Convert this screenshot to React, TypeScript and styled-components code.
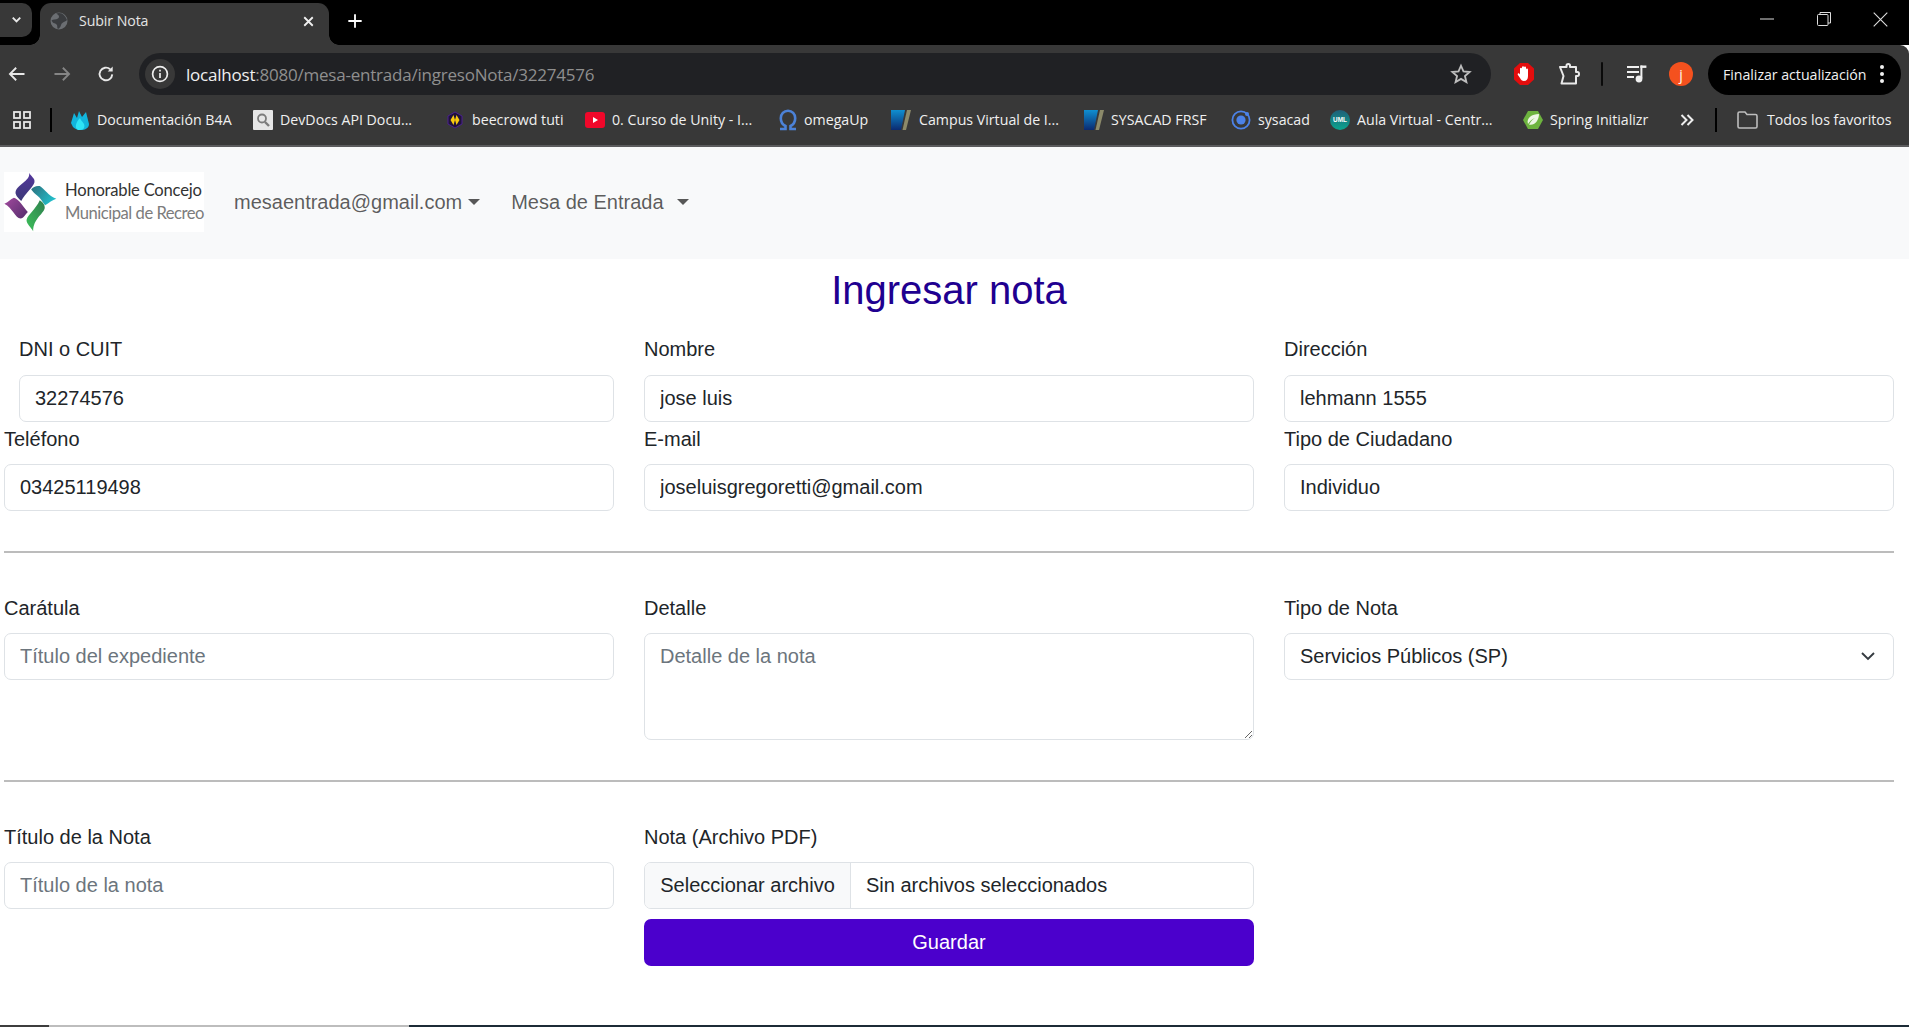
import React from "react";
import styled, { createGlobalStyle } from "styled-components";

const Global = createGlobalStyle`
  html, body { margin: 0; padding: 0; height: 100%; background: #fff; overflow: hidden; }
  #root { height: 100%; }
  * { box-sizing: border-box; }
`;

const Page = styled.div`
  height: 1027px;
  display: flex;
  flex-direction: column;
  font-family: "Liberation Sans", Arial, sans-serif;
  color: #212529;
`;

/* ---------- browser chrome ---------- */
const TabStrip = styled.div`
  height: 45px;
  flex: none;
  background: #000;
  display: flex;
  align-items: flex-end;
  font-family: "Open Sans", "Noto Sans", sans-serif;
`;
const TabSearch = styled.div`
  width: 32px;
  height: 34px;
  margin-bottom: 8px;
  padding-bottom: 2px;
  background: #383838;
  border-radius: 0 10px 10px 0;
  display: flex;
  align-items: center;
  justify-content: center;
`;
const Tab = styled.div`
  position: relative;
  width: 289px;
  height: 42px;
  margin-left: 8px;
  padding: 0 12px 6px 10px;
  background: #383838;
  border-radius: 11px 11px 0 0;
  display: flex;
  align-items: center;
  gap: 11px;
  color: #e4e4e4;
  font-size: 14.2px;
  letter-spacing: -0.1px;
  &::before, &::after {
    content: "";
    position: absolute;
    bottom: 0;
    width: 10px;
    height: 10px;
    background: radial-gradient(circle at var(--cx) 0, #000 9.5px, #383838 10px);
  }
  &::before { left: -10px; --cx: 0; }
  &::after { right: -10px; --cx: 100%; }
`;
const TabTitle = styled.span`
  flex: 1;
  padding-bottom: 1px;
`;
const NewTab = styled.div`
  width: 52px;
  height: 42px;
  padding-bottom: 6px;
  display: flex;
  align-items: center;
  justify-content: center;
`;
const WindowButtons = styled.div`
  margin-left: auto;
  height: 45px;
  width: 170px;
  display: flex;
  align-items: center;
  padding: 0 21px 7px 21px;
  justify-content: space-between;
`;

const Toolbar = styled.div`
  height: 52px;
  flex: none;
  background: #383838;
  border-top-right-radius: 9px;
  display: flex;
  align-items: center;
  font-family: "Open Sans", "Noto Sans", sans-serif;
  padding-top: 6px;
`;
const NavIcons = styled.div`
  width: 139px;
  flex: none;
  padding: 0 23px 0 7px;
  display: flex;
  align-items: center;
  justify-content: space-between;
`;
const Omnibox = styled.div`
  width: 1352px;
  height: 42px;
  flex: none;
  background: #202124;
  border-radius: 21px;
  display: flex;
  align-items: center;
  padding: 0 19px 0 6px;
`;
const InfoBadge = styled.div`
  width: 30px;
  height: 30px;
  flex: none;
  border-radius: 50%;
  background: #383838;
  display: flex;
  align-items: center;
  justify-content: center;
`;
const Url = styled.div`
  margin-left: 11px;
  flex: 1;
  font-size: 17px;
  letter-spacing: -0.22px;
  color: #8f8f8f;
  white-space: nowrap;
  & > b { font-weight: 400; color: #f0f0f0; }
`;
const Extensions = styled.div`
  flex: 1;
  display: flex;
  align-items: center;
  padding: 0 8px 0 22px;
`;
const ThinSep = styled.div`
  width: 2px;
  height: 24px;
  flex: none;
  background: #0a0a0a;
  border-radius: 1px;
`;
const ExtSlot = styled.div<{ $ml: number }>`
  margin-left: ${(p) => p.$ml}px;
  display: flex;
  align-items: center;
  justify-content: center;
  flex: none;
`;
const Avatar = styled.div`
  width: 24px;
  height: 24px;
  margin-left: 20px;
  border-radius: 50%;
  background: #f4511e;
  color: #ffe;
  font-size: 14px;
  display: flex;
  align-items: center;
  justify-content: center;
  flex: none;
`;
const UpdatePill = styled.div`
  margin-left: auto;
  width: 193px;
  height: 42px;
  border-radius: 21px;
  background: #000;
  color: #f1f1f1;
  font-size: 14.2px;
  letter-spacing: -0.04px;
  padding: 0 17px 0 15px;
  display: flex;
  align-items: center;
  justify-content: space-between;
  white-space: nowrap;
`;

const Bookmarks = styled.div`
  height: 50px;
  flex: none;
  background: #383838;
  border-bottom: 2px solid #5b5b5d;
  padding: 0 17px 3px 13px;
  display: flex;
  align-items: center;
  color: #f0f0f0;
  font-family: "Open Sans", "Noto Sans", sans-serif;
  font-size: 14.2px;
  letter-spacing: 0;
`;
const BookSep = styled.div<{ $ml: number }>`
  width: 2px;
  height: 24px;
  flex: none;
  background: #000;
  margin-left: ${(p) => p.$ml}px;
`;
const BookSpacer = styled.div`
  width: 18px;
  flex: none;
`;
const Bookmark = styled.div<{ $w: number; $gap?: number }>`
  width: ${(p) => p.$w}px;
  flex: none;
  display: flex;
  align-items: center;
  gap: ${(p) => p.$gap ?? 7}px;
  white-space: nowrap;
`;
const MoreChevrons = styled.div`
  width: 18px;
  flex: none;
  display: flex;
  align-items: center;
`;
const AllFavs = styled.div`
  margin-left: 20px;
  display: flex;
  align-items: center;
  gap: 9px;
  white-space: nowrap;
`;

/* ---------- site navbar ---------- */
const Navbar = styled.nav`
  height: 112px;
  flex: none;
  background: #f8f9fa;
  display: flex;
  align-items: center;
  padding: 0 0 2px 4px;
  font-size: 20px;
  color: rgba(0, 0, 0, 0.65);
`;
const Logo = styled.div`
  width: 200px;
  height: 60px;
  background: #fff;
  display: flex;
  align-items: center;
  gap: 8px;
  flex: none;
  & > svg { flex: none; }
`;
const LogoText = styled.div`
  font-family: Lato, "Open Sans", sans-serif;
  display: flex;
  flex-direction: column;
  gap: 1px;
  white-space: nowrap;
  margin-top: -2px;
`;
const LogoLine = styled.div<{ $light?: boolean }>`
  font-size: 16.6px;
  line-height: 22px;
  letter-spacing: ${(p) => (p.$light ? "-0.48px" : "-0.22px")};
  color: ${(p) => (p.$light ? "#7c7c7c" : "#333")};
`;
const NavLink = styled.div<{ $ml: number; $gap: number }>`
  margin-left: ${(p) => p.$ml}px;
  display: flex;
  align-items: center;
  gap: ${(p) => p.$gap}px;
`;
const Caret = styled.span`
  width: 0;
  height: 0;
  border-top: 6px solid rgba(0, 0, 0, 0.65);
  border-left: 6px solid transparent;
  border-right: 6px solid transparent;
`;

/* ---------- form ---------- */
const Main = styled.main`
  flex: 1;
  padding: 0 15px 0 4px;
`;
const Title = styled.h2`
  margin: 0;
  height: 76px;
  padding-top: 8px;
  text-align: center;
  font-weight: 400;
  font-size: 40px;
  line-height: 47px;
  color: #1f0090;
`;
const Grid = styled.div`
  display: grid;
  grid-template-columns: repeat(3, 1fr);
  column-gap: 30px;
  row-gap: 3px;
`;
const Field = styled.div<{ $inset?: boolean }>`
  display: flex;
  flex-direction: column;
  min-width: 0;
  padding-left: ${(p) => (p.$inset ? 15 : 0)}px;
`;
const Label = styled.label`
  font-size: 20px;
  line-height: 29px;
  margin-bottom: 10.5px;
`;
const controlStyles = `
  width: 100%;
  height: 47px;
  border: 1px solid #dee2e6;
  border-radius: 7px;
  background: #fff;
  color: #212529;
  font-family: "Liberation Sans", Arial, sans-serif;
  font-size: 20px;
  padding: 0 15px;
  outline: none;
  &::placeholder { color: #6c757d; opacity: 1; }
`;
const Input = styled.input`
  ${controlStyles}
`;
const TextArea = styled.textarea`
  ${controlStyles}
  height: 107px;
  padding-top: 8px;
  line-height: 29px;
  resize: vertical;
  display: block;
`;
const SelectBox = styled.div`
  position: relative;
`;
const Select = styled.select`
  ${controlStyles}
  padding-bottom: 2px;
  appearance: none;
`;
const SelectChevron = styled.svg`
  position: absolute;
  right: 19px;
  top: 17px;
  pointer-events: none;
`;
const Divider = styled.hr`
  border: 0;
  height: 2px;
  margin: 40px 0 40.5px;
  background: #bcbcbc;
`;
const FileControl = styled.div`
  height: 47px;
  border: 1px solid #dee2e6;
  border-radius: 7px;
  display: flex;
  align-items: stretch;
  overflow: hidden;
  font-size: 20px;
`;
const FileButton = styled.div`
  width: 206px;
  flex: none;
  background: #f8f9fa;
  border-right: 1px solid #dee2e6;
  display: flex;
  align-items: center;
  justify-content: center;
`;
const FileName = styled.div`
  display: flex;
  align-items: center;
  padding-left: 15px;
`;
const SaveButton = styled.button`
  margin-top: 10px;
  height: 47px;
  border: 0;
  border-radius: 7px;
  background: #4b00cc;
  color: #fff;
  font-family: "Liberation Sans", Arial, sans-serif;
  font-size: 20px;
`;
const Taskbar = styled.div`
  height: 2px;
  flex: none;
  display: flex;
`;
const TaskSegment = styled.div<{ $w?: number; $bg: string }>`
  width: ${(p) => (p.$w ? `${p.$w}px` : "auto")};
  flex: ${(p) => (p.$w ? "none" : 1)};
  background: ${(p) => p.$bg};
`;

/* ---------- icons ---------- */
const Stroke: React.FC<{ size: number; w?: number; c?: string; children: React.ReactNode }> = ({ size, w = 2, c = "#e8e8e8", children }) => (
  <svg width={size} height={size} viewBox="0 0 24 24" fill="none" stroke={c} strokeWidth={w}>{children}</svg>
);

const LogoMark = () => (
  <svg width="53" height="60" viewBox="12 20 160 180">
    <defs>
      <linearGradient id="lgI" x1="0" y1="0" x2="0" y2="1"><stop offset="0" stopColor="#54369c" /><stop offset="1" stopColor="#3c3a78" /></linearGradient>
      <linearGradient id="lgT" x1="0" y1="0" x2="1" y2="0.6"><stop offset="0" stopColor="#2d6f7c" /><stop offset="1" stopColor="#22c0cc" /></linearGradient>
      <linearGradient id="lgM" x1="0" y1="0" x2="1" y2="0.8"><stop offset="0" stopColor="#a24a9e" /><stop offset="1" stopColor="#5a2f70" /></linearGradient>
      <linearGradient id="lgG" x1="1" y1="0" x2="0" y2="1"><stop offset="0" stopColor="#2f7f4e" /><stop offset="1" stopColor="#3cc05a" /></linearGradient>
    </defs>
    <path d="M88 22C92 32 106 38 104 50C101 64 76 84 64 107C58 100 50 95 47 84C45 72 58 62 70 52C80 44 90 36 88 22Z" fill="url(#lgI)" />
    <path d="M94 72C100 64 110 60 120 62C134 70 146 92 170 100C158 104 148 112 136 120C128 110 122 96 112 90C106 86 100 80 94 72Z" fill="url(#lgT)" />
    <path d="M13 115C24 112 32 100 42 97C56 100 70 124 84 140C76 148 72 158 62 160C46 158 38 128 13 115Z" fill="url(#lgM)" />
    <path d="M120 105C128 110 136 118 135 128C132 146 100 160 100 198C94 186 80 176 80 164C84 148 108 132 120 105Z" fill="url(#lgG)" />
  </svg>
);

const FlameIcon = () => (
  <svg width="20" height="20" viewBox="0 0 20 20"><path d="M1 13L4 3L7 8L9 1L12 7L16 2L19 14C19 18 15 20 11 20C7 20 5 19 3 17Z" fill="#12b5dc" /><path d="M8 20C4 18 6 12 10 8C11 12 16 13 14 18C13 20 10 20 8 20Z" fill="#2fe4f5" /></svg>
);
const DevDocsIcon = () => (
  <svg width="20" height="20" viewBox="0 0 20 20"><rect width="20" height="20" rx="1" fill="#e6e6e6" /><circle cx="9" cy="8.5" r="4" fill="none" stroke="#7c7c7c" strokeWidth="1.8" /><path d="M12 12L16 16" stroke="#7c7c7c" strokeWidth="2.4" /></svg>
);
const BeeIcon = () => (
  <svg width="16" height="18" viewBox="0 0 16 18"><path d="M8 1L15 5V13L8 17L1 13V5Z" fill="#20123a" stroke="#4a2190" /><path d="M6.5 4L3.5 9L6.5 14L8 9ZM9.5 4L12.5 9L9.5 14L8 9Z" fill="#f7c90e" /></svg>
);
const YoutubeIcon = () => (
  <svg width="20" height="16" viewBox="0 0 20 16"><rect width="20" height="16" rx="3" fill="#f0072a" /><path d="M8 5L13 8L8 11Z" fill="#fff" /></svg>
);
const OmegaIcon = () => (
  <svg width="18" height="22" viewBox="0 0 18 22" fill="none" stroke="#4c82d8" strokeWidth="2.6"><path d="M1 20H6.5V17C3.5 15.5 1.8 12.5 1.8 9.2C1.8 5 4.8 1.8 9 1.8S16.2 5 16.2 9.2C16.2 12.5 14.5 15.5 11.5 17V20H17" /></svg>
);
const CampusIcon: React.FC<{ id: string }> = ({ id }) => (
  <svg width="20" height="20" viewBox="0 0 20 20">
    <defs><linearGradient id={id} x1="0" y1="0" x2="0" y2="1"><stop offset="0" stopColor="#0f8fd0" /><stop offset="1" stopColor="#0b2a70" /></linearGradient></defs>
    <path d="M0 0H14L10 20H0Z" fill={`url(#${id})`} /><path d="M16 0H20L15 20H11.5Z" fill="#8c8a6a" />
  </svg>
);
const RingIcon = () => (
  <svg width="20" height="20" viewBox="0 0 20 20"><circle cx="10" cy="10" r="8.6" fill="none" stroke="#4c82e8" strokeWidth="1.8" /><circle cx="10" cy="10" r="4.6" fill="#4c82e8" /><circle cx="16" cy="4" r="2" fill="#4c82e8" /></svg>
);
const UmlIcon = () => (
  <svg width="20" height="20" viewBox="0 0 20 20">
    <defs><linearGradient id="ug" x1="0" y1="0" x2="0" y2="1"><stop offset="0" stopColor="#1f5f78" /><stop offset="1" stopColor="#0ba58e" /></linearGradient></defs>
    <circle cx="10" cy="10" r="10" fill="url(#ug)" /><text x="10" y="12.2" textAnchor="middle" fontSize="6.4" fontWeight="700" fill="#fff" fontFamily="Liberation Sans">UML</text>
  </svg>
);
const SpringIcon = () => (
  <svg width="20" height="20" viewBox="0 0 20 20"><path d="M5 1H15L20 10L15 19H5L0 10Z" fill="#6db33f" /><path d="M5 14C3 8 9 4 16 4C16 11 11 16 6 14.5C8 11 10 9 12 8C9 9 7 11 5 14Z" fill="#eef6e6" /></svg>
);
const AdblockIcon = () => (
  <svg width="22" height="24" viewBox="0 0 22 24"><path d="M7 1H15L21 6.5V17.5L15 23H7L1 17.5V6.5Z" fill="#e30d0d" /><path d="M7 11V6.8a1 1 0 0 1 2 0V11V5.2a1 1 0 0 1 2 0V11V5.6a1 1 0 0 1 2 0V11.5V7.6a1 1 0 0 1 2 0V14C15 17.5 13.5 19 11 19C9 19 8 18 7 16L4.8 12.8C4.2 11.6 5.6 10.7 6.4 11.8L7 12.6Z" fill="#fff" /></svg>
);
const PuzzleIcon = () => (
  <svg width="24" height="24" viewBox="0 0 24 24" fill="none" stroke="#e9e9e9" strokeWidth="2" strokeLinejoin="round"><path d="M3 5H9.5V3.5C9.5 1.5 13 1.5 13 3.5V5H19V10H20.5C22.5 10 22.5 14 20.5 14H19V21.5H4.5L6.5 14L3 5Z" /></svg>
);
const MusicIcon = () => (
  <svg width="22" height="20" viewBox="0 0 22 20" fill="#f0f0f0"><rect x="0" y="2" width="12" height="2" /><rect x="0" y="7" width="12" height="2" /><rect x="0" y="12" width="7" height="2" /><circle cx="12" cy="15" r="3.4" /><rect x="13.4" y="1.5" width="2" height="13" /><rect x="13.4" y="1.5" width="6" height="2.4" /></svg>
);

const bookmarks = [
  { w: 183, icon: <FlameIcon />, text: "Documentación B4A" },
  { w: 194, icon: <DevDocsIcon />, text: "DevDocs API Docu..." },
  { w: 138, icon: <BeeIcon />, text: "beecrowd tuti", gap: 9 },
  { w: 194, icon: <YoutubeIcon />, text: "0. Curso de Unity - I...", gap: 7 },
  { w: 112, icon: <OmegaIcon />, text: "omegaUp" },
  { w: 193, icon: <CampusIcon id="cg1" />, text: "Campus Virtual de I...", gap: 8 },
  { w: 147, icon: <CampusIcon id="cg2" />, text: "SYSACAD FRSF" },
  { w: 99, icon: <RingIcon />, text: "sysacad", gap: 7 },
  { w: 193, icon: <UmlIcon />, text: "Aula Virtual - Centr..." },
  { w: 157, icon: <SpringIcon />, text: "Spring Initializr", gap: 7 },
];

export default function App() {
  return (
    <Page>
      <Global />
      <TabStrip>
        <TabSearch>
          <Stroke size={15} w={3}><path d="M6 9L12 15L18 9" /></Stroke>
        </TabSearch>
        <Tab>
          <svg width="18" height="18" viewBox="0 0 18 18">
            <circle cx="9" cy="9" r="8.5" fill="#6b6e72" />
            <path d="M6 1.5C9 3 10 5 8 6.5C6 8 3 7 1.5 8.5C3 12 6 11 7 13C7.5 15 7 16 8 17C12 15 10 12 13 10.5C15 9.5 16 9 17 8C16 5 14 3 12 1.5C10 .8 8 .8 6 1.5Z" fill="#3a3c3f" />
          </svg>
          <TabTitle>Subir Nota</TabTitle>
          <Stroke size={17} w={2.6} c="#f0f0f0"><path d="M6 6L18 18M18 6L6 18" /></Stroke>
        </Tab>
        <NewTab>
          <Stroke size={20} w={2.2} c="#fff"><path d="M12 4V20M4 12H20" /></Stroke>
        </NewTab>
        <WindowButtons>
          <svg width="14" height="14" viewBox="0 0 14 14"><path d="M0 7H14" stroke="#ddd" strokeWidth="1" /></svg>
          <svg width="14" height="14" viewBox="0 0 14 14" fill="none" stroke="#ddd"><rect x=".5" y="2.5" width="10.5" height="11" rx="1" /><path d="M3 2.5V.5H13.5V11H11" /></svg>
          <svg width="15" height="15" viewBox="0 0 15 15"><path d="M.7 .7L14.3 14.3M14.3 .7L.7 14.3" stroke="#ddd" strokeWidth="1.1" /></svg>
        </WindowButtons>
      </TabStrip>

      <Toolbar>
        <NavIcons>
          <Stroke size={20} w={2.2}><path d="M21 12H4M11 4.5L3.5 12L11 19.5" /></Stroke>
          <Stroke size={20} w={2.2} c="#858585"><path d="M3 12H20M13 4.5L20.5 12L13 19.5" /></Stroke>
          <Stroke size={20} w={2.3}><path d="M19.5 12.5A7.6 7.6 0 1 1 17 6.3" /><path d="M20 3V9H14Z" fill="#e8e8e8" stroke="none" /></Stroke>
        </NavIcons>
        <Omnibox>
          <InfoBadge>
            <svg width="18" height="18" viewBox="0 0 18 18" fill="none" stroke="#eee" strokeWidth="1.7"><circle cx="9" cy="9" r="7.4" /><path d="M9 8V13M9 4.8V6.6" /></svg>
          </InfoBadge>
          <Url><b>localhost</b>:8080/mesa-entrada/ingresoNota/32274576</Url>
          <svg width="22" height="22" viewBox="0 0 24 24" fill="none" stroke="#bdbdbd" strokeWidth="2"><path d="M12 3L14.7 9.2L21.4 9.8L16.3 14.2L17.9 20.8L12 17.3L6.1 20.8L7.7 14.2L2.6 9.8L9.3 9.2Z" /></svg>
        </Omnibox>
        <Extensions>
          <AdblockIcon />
          <ExtSlot $ml={22}><PuzzleIcon /></ExtSlot>
          <ExtSlot $ml={20}><ThinSep /></ExtSlot>
          <ExtSlot $ml={24}><MusicIcon /></ExtSlot>
          <Avatar>j</Avatar>
          <UpdatePill>
            <span>Finalizar actualización</span>
            <svg width="4" height="20" viewBox="0 0 4 20" fill="#f1f1f1"><circle cx="2" cy="3" r="2" /><circle cx="2" cy="10" r="2" /><circle cx="2" cy="17" r="2" /></svg>
          </UpdatePill>
        </Extensions>
      </Toolbar>

      <Bookmarks>
        <svg width="18" height="18" viewBox="0 0 18 18" fill="none" stroke="#e8e8e8" strokeWidth="1.8"><rect x="1" y="1" width="6" height="6" /><rect x="11" y="1" width="6" height="6" /><rect x="1" y="11" width="6" height="6" /><rect x="11" y="11" width="6" height="6" /></svg>
        <BookSep $ml={19} />
        <BookSpacer />
        {bookmarks.map((b) => (
          <Bookmark key={b.text} $w={b.w} $gap={b.gap}>
            {b.icon}
            <span>{b.text}</span>
          </Bookmark>
        ))}
        <MoreChevrons>
          <svg width="14" height="12" viewBox="0 0 14 12" fill="none" stroke="#eee" strokeWidth="2"><path d="M1.5 1L6.5 6L1.5 11M7.5 1L12.5 6L7.5 11" /></svg>
        </MoreChevrons>
        <BookSep $ml={17} />
        <AllFavs>
          <svg width="21" height="18" viewBox="0 0 21 18" fill="none" stroke="#bdbdbd" strokeWidth="1.6"><path d="M1 2.5C1 1.5 1.5 1 2.5 1H8L10 3.5H18.5C19.5 3.5 20 4 20 5V15.5C20 16.5 19.5 17 18.5 17H2.5C1.5 17 1 16.5 1 15.5Z" /></svg>
          <span>Todos los favoritos</span>
        </AllFavs>
      </Bookmarks>

      <Navbar>
        <Logo>
          <LogoMark />
          <LogoText>
            <LogoLine>Honorable Concejo</LogoLine>
            <LogoLine $light>Municipal de Recreo</LogoLine>
          </LogoText>
        </Logo>
        <NavLink $ml={30} $gap={6}>mesaentrada@gmail.com<Caret /></NavLink>
        <NavLink $ml={31} $gap={13}>Mesa de Entrada<Caret /></NavLink>
      </Navbar>

      <Main>
        <Title>Ingresar nota</Title>
        <Grid>
          <Field $inset><Label>DNI o CUIT</Label><Input readOnly value="32274576" /></Field>
          <Field><Label>Nombre</Label><Input readOnly value="jose luis" /></Field>
          <Field><Label>Dirección</Label><Input readOnly value="lehmann 1555" /></Field>
          <Field><Label>Teléfono</Label><Input readOnly value="03425119498" /></Field>
          <Field><Label>E-mail</Label><Input readOnly value="joseluisgregoretti@gmail.com" /></Field>
          <Field><Label>Tipo de Ciudadano</Label><Input readOnly value="Individuo" /></Field>
        </Grid>
        <Divider />
        <Grid>
          <Field><Label>Carátula</Label><Input placeholder="Título del expediente" /></Field>
          <Field><Label>Detalle</Label><TextArea placeholder="Detalle de la nota" /></Field>
          <Field>
            <Label>Tipo de Nota</Label>
            <SelectBox>
              <Select defaultValue="sp"><option value="sp">Servicios Públicos (SP)</option></Select>
              <SelectChevron width="14" height="12" viewBox="0 0 14 12" fill="none" stroke="#343a40" strokeWidth="1.9"><path d="M1 3L7 9L13 3" /></SelectChevron>
            </SelectBox>
          </Field>
        </Grid>
        <Divider />
        <Grid>
          <Field><Label>Título de la Nota</Label><Input placeholder="Título de la nota" /></Field>
          <Field>
            <Label>Nota (Archivo PDF)</Label>
            <FileControl>
              <FileButton>Seleccionar archivo</FileButton>
              <FileName>Sin archivos seleccionados</FileName>
            </FileControl>
            <SaveButton>Guardar</SaveButton>
          </Field>
        </Grid>
      </Main>

      <Taskbar>
        <TaskSegment $w={49} $bg="#3d3d3d" />
        <TaskSegment $w={360} $bg="#bdbdbd" />
        <TaskSegment $bg="#1c2b36" />
      </Taskbar>
    </Page>
  );
}
